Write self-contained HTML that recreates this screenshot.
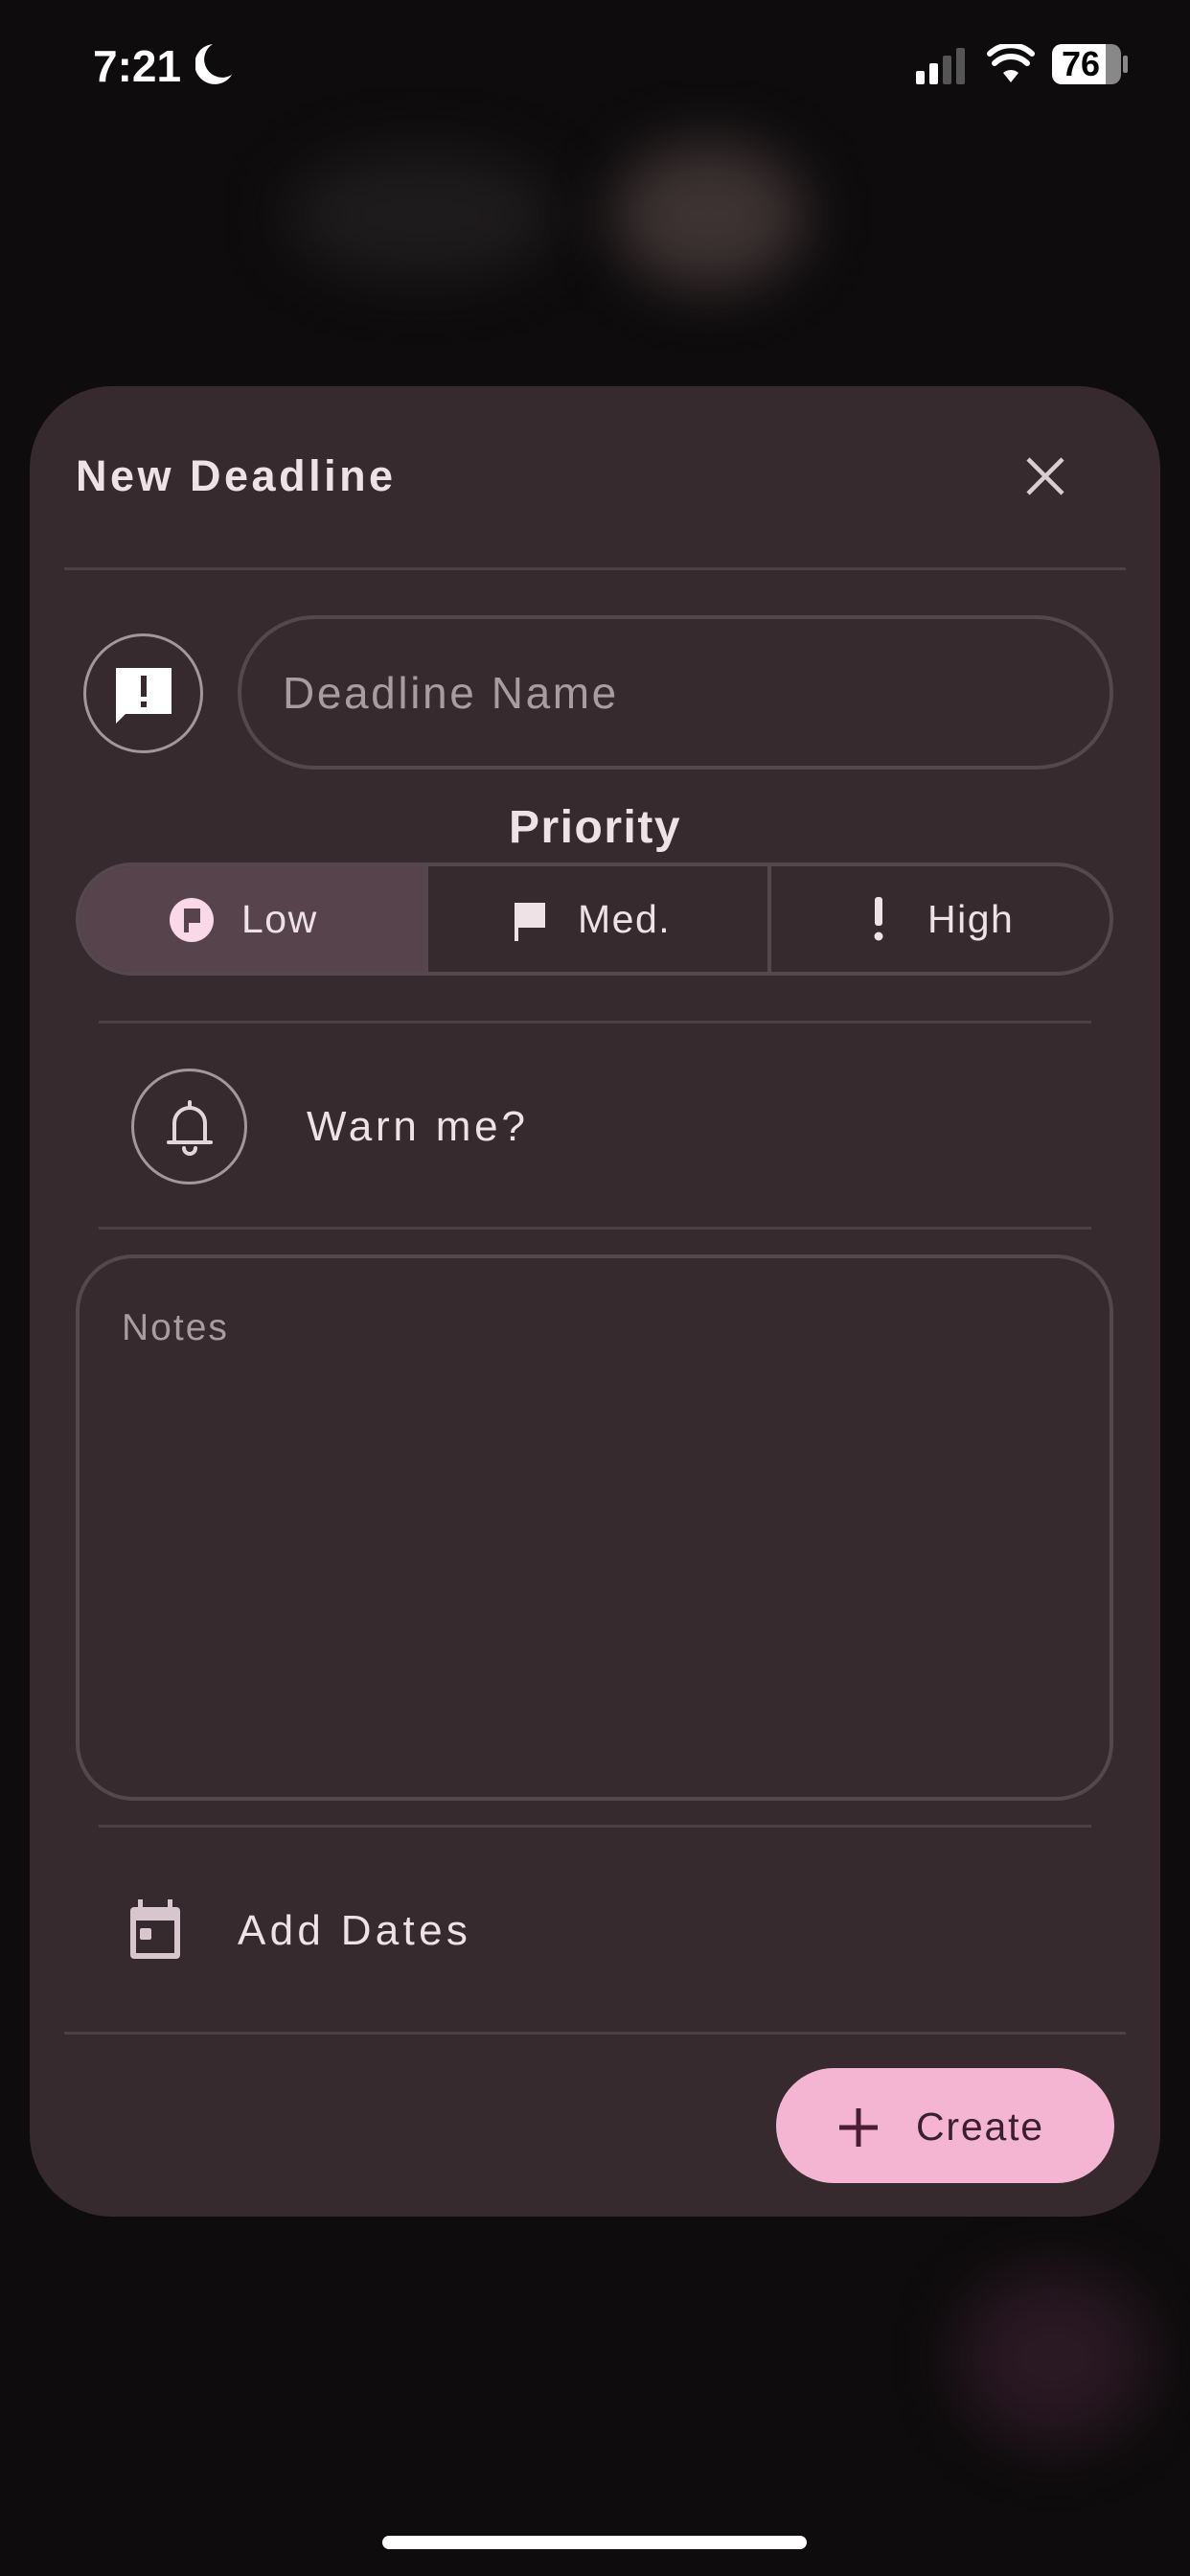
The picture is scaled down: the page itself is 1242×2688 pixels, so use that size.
<!DOCTYPE html>
<html><head><meta charset="utf-8"><style>
*{margin:0;padding:0;box-sizing:border-box}
body{width:1242px;height:2688px;background:#0e0c0d;position:relative;overflow:hidden;font-family:"Liberation Sans",sans-serif;color:#eadfe3}
.a{position:absolute}
.blur{position:absolute;border-radius:50%;filter:blur(30px)}
.card{left:31px;top:403px;width:1180px;height:1910px;background:#362a2f;border-radius:86px}
.hr{position:absolute;height:3px;background:#4d4046}
.t{position:absolute;white-space:nowrap;line-height:1}
</style></head><body>
<div class="blur" style="left:300px;top:160px;width:280px;height:130px;background:#1f1c1d"></div>
<div class="blur" style="left:640px;top:150px;width:200px;height:150px;background:#3e3333"></div>
<div class="blur" style="left:1000px;top:2370px;width:200px;height:180px;background:#2a1822"></div>
<!-- status bar -->
<div class="t" style="left:97px;top:46px;font-size:46px;font-weight:bold;color:#fff">7:21</div>
<svg class="a" style="left:204px;top:44px" width="40" height="46" viewBox="0 0 40 46"><path d="M18 2 A21 21 0 1 0 38 34 A18 18 0 0 1 18 2Z" fill="#fff"/></svg>
<svg class="a" style="left:955px;top:48px" width="60" height="40"><rect x="1" y="26" width="9" height="14" rx="2" fill="#fff"/><rect x="15" y="18" width="9" height="22" rx="2" fill="#fff"/><rect x="29" y="10" width="9" height="30" rx="2" fill="#555"/><rect x="43" y="2" width="9" height="38" rx="2" fill="#555"/></svg>
<svg class="a" style="left:1030px;top:46px" width="50" height="42" viewBox="0 0 50 42"><path d="M25 40 L33 30 A12 12 0 0 0 17 30Z" fill="#fff"/><path d="M8 20 A24 24 0 0 1 42 20" stroke="#fff" stroke-width="6" fill="none" stroke-linecap="round"/><path d="M3 10 A32 32 0 0 1 47 10" stroke="#fff" stroke-width="6" fill="none" stroke-linecap="round"/></svg>
<div class="a" style="left:1098px;top:46px;width:72px;height:42px;border-radius:10px;background:linear-gradient(90deg,#fff 0 78%,#888 78%)"></div>
<div class="a" style="left:1172px;top:58px;width:5px;height:18px;border-radius:2px;background:#888"></div>
<div class="t" style="left:1108px;top:49px;font-size:36px;font-weight:bold;color:#000">76</div>

<div class="a card"></div>
<div class="t" style="left:79px;top:474px;font-size:45px;font-weight:bold;color:#eee2e6;letter-spacing:3.5px">New Deadline</div>
<svg class="a" style="left:1069px;top:475px" width="44" height="44"><path d="M4 4L40 40M40 4L4 40" stroke="#d9cdd2" stroke-width="4.5"/></svg>
<div class="hr" style="left:67px;top:592px;width:1108px"></div>

<div class="a" style="left:87px;top:661px;width:125px;height:125px;border-radius:50%;border:3px solid #a6959c"></div>
<svg class="a" style="left:119px;top:695px" width="62" height="62" viewBox="0 0 62 62"><path d="M2 2H60V50H12L2 60Z" fill="#fff"/><rect x="28" y="10" width="6" height="22" fill="#362a2f"/><rect x="28" y="37" width="6" height="6" fill="#362a2f"/></svg>
<div class="a" style="left:248px;top:642px;width:914px;height:161px;border-radius:81px;border:4px solid #54474d"></div>
<div class="t" style="left:295px;top:700px;font-size:46px;color:#a89ca1;letter-spacing:2.6px">Deadline Name</div>

<div class="t" style="left:0;width:1242px;text-align:center;top:840px;font-size:48px;font-weight:bold;color:#eee2e6;letter-spacing:1.5px">Priority</div>
<div class="a" style="left:79px;top:900px;width:1083px;height:118px;border-radius:59px;border:4px solid #54474d;overflow:hidden">
 <div class="a" style="left:0;top:0;width:362px;height:110px;background:#56434b"></div>
 <div class="a" style="left:360px;top:0;width:4px;height:110px;background:#54474d"></div>
 <div class="a" style="left:718px;top:0;width:4px;height:110px;background:#54474d"></div>
</div>
<svg class="a" style="left:177px;top:937px" width="46" height="46" viewBox="0 0 46 46"><circle cx="23" cy="23" r="23" fill="#f9d8e8"/><path d="M15 36V11H32V26H20V36Z" fill="#56434b"/></svg>
<div class="t" style="left:252px;top:939px;font-size:41px;color:#eee2e6;letter-spacing:1.5px">Low</div>
<svg class="a" style="left:535px;top:940px" width="38" height="42" viewBox="0 0 38 42"><path d="M2 42V2H34V28H6V42Z" fill="#eee2e6"/></svg>
<div class="t" style="left:603px;top:939px;font-size:41px;color:#eee2e6;letter-spacing:1.5px">Med.</div>
<svg class="a" style="left:911px;top:936px" width="12" height="46"><rect x="2" y="0" width="8" height="30" rx="3" fill="#eee2e6"/><circle cx="6" cy="41" r="4.5" fill="#eee2e6"/></svg>
<div class="t" style="left:968px;top:939px;font-size:41px;color:#eee2e6;letter-spacing:1.5px">High</div>

<div class="hr" style="left:103px;top:1065px;width:1036px"></div>
<div class="a" style="left:137px;top:1115px;width:121px;height:121px;border-radius:50%;border:3px solid #a6959c"></div>
<svg class="a" style="left:172px;top:1146px" width="52" height="60" viewBox="0 0 52 60"><path d="M26 4V8M10 46V26A16 16 0 0 1 42 26V46M4 46H48M20 52A6 6 0 0 0 32 52" stroke="#e3d6db" stroke-width="4" fill="none" stroke-linecap="round"/></svg>
<div class="t" style="left:320px;top:1154px;font-size:44px;color:#eee2e6;letter-spacing:3.8px">Warn me?</div>
<div class="hr" style="left:103px;top:1280px;width:1036px"></div>

<div class="a" style="left:79px;top:1309px;width:1083px;height:570px;border-radius:60px;border:4px solid #54474d"></div>
<div class="t" style="left:127px;top:1366px;font-size:39px;color:#a89ca1;letter-spacing:2px">Notes</div>
<div class="hr" style="left:103px;top:1904px;width:1036px"></div>

<svg class="a" style="left:134px;top:1982px" width="56" height="64" viewBox="0 0 56 64"><rect x="2" y="8" width="52" height="54" rx="4" fill="#d7c6cd"/><rect x="8" y="22" width="40" height="34" fill="#362a2f"/><rect x="12" y="30" width="12" height="12" rx="2" fill="#d7c6cd"/><rect x="10" y="0" width="5" height="12" fill="#d7c6cd"/><rect x="41" y="0" width="5" height="12" fill="#d7c6cd"/></svg>
<div class="t" style="left:248px;top:1993px;font-size:44px;color:#eee2e6;letter-spacing:4.3px">Add Dates</div>
<div class="hr" style="left:67px;top:2120px;width:1108px"></div>

<div class="a" style="left:810px;top:2158px;width:353px;height:120px;border-radius:60px;background:#f4b5d3"></div>
<svg class="a" style="left:874px;top:2198px" width="44" height="44"><path d="M22 2V42M2 22H42" stroke="#4a1f33" stroke-width="5"/></svg>
<div class="t" style="left:956px;top:2199px;font-size:41px;color:#3a1f2c;letter-spacing:1.8px">Create</div>

<div class="a" style="left:399px;top:2646px;width:443px;height:14px;border-radius:7px;background:#fff"></div>
</body></html>
